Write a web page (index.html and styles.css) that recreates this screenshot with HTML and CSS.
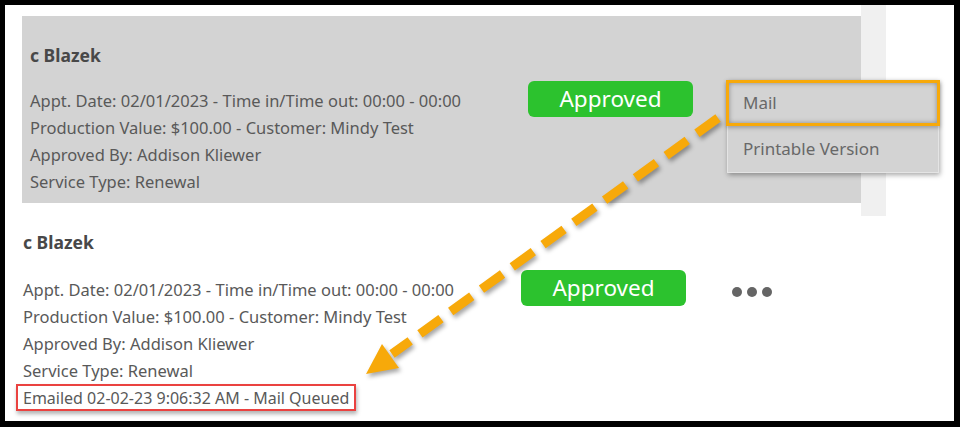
FILE: index.html
```html
<!DOCTYPE html>
<html lang="en">
<head>
    <meta charset="UTF-8">
    <title>Appointments</title>
    <link rel="stylesheet" href="styles.css">
</head>
<body>
    <div class="frame">
        <section class="list">
            <div class="record active">
                <h3 class="record-name">c Blazek</h3>
                <div class="record-body">
                    <div class="details">
                        <p>Appt. Date: 02/01/2023 - Time in/Time out: 00:00 - 00:00</p>
                        <p>Production Value: $100.00 - Customer: Mindy Test</p>
                        <p>Approved By: Addison Kliewer</p>
                        <p>Service Type: Renewal</p>
                    </div>
                    <div class="status">Approved</div>
                    <div class="actions">
                        <span class="dots"><i></i><i></i><i></i></span>
                        <ul class="menu">
                            <li class="menu-item highlighted">Mail</li>
                            <li class="menu-item">Printable Version</li>
                        </ul>
                    </div>
                </div>
            </div>
            <div class="record second">
                <h3 class="record-name">c Blazek</h3>
                <div class="record-body">
                    <div class="details">
                        <p>Appt. Date: 02/01/2023 - Time in/Time out: 00:00 - 00:00</p>
                        <p>Production Value: $100.00 - Customer: Mindy Test</p>
                        <p>Approved By: Addison Kliewer</p>
                        <p>Service Type: Renewal</p>
                        <p><span class="mail-note">Emailed 02-02-23 9:06:32 AM - Mail Queued</span></p>
                    </div>
                    <div class="status">Approved</div>
                    <div class="actions">
                        <span class="dots"><i></i><i></i><i></i></span>
                    </div>
                </div>
            </div>
        </section>
        <div class="rail"></div>
    </div>

    <!-- annotation arrow: Mail -> emailed line -->
    <svg class="arrow" width="960" height="427" viewBox="0 0 960 427">
        <line x1="718" y1="118" x2="392" y2="354" stroke="#f7a90a" stroke-width="9" stroke-dasharray="26 12"/>
        <polygon points="366,374 382,344 399,368" fill="#f7a90a"/>
    </svg>
</body>
</html>
```
FILE: styles.css
```css
body {
    margin: 0;
    background: #000;
    font-family: "Noto Sans", "Open Sans", sans-serif;
    position: relative;
}
.frame {
    margin: 5px 6px 6px 5px;
    height: 416px;
    background: #fff;
    display: flex;
    align-items: flex-start;
    overflow: hidden;
}
.list {
    width: 856px;
    padding-top: 11px;
}
.rail {
    width: 25px;
    height: 211px;
    background: #f0f0f0;
}
.record {
    padding: 26px 0 8px 8px;
    margin-left: 10px;
}
.record.active {
    margin-left: 17px;
    background: #d3d3d3;
    height: 187px;
    box-sizing: border-box;
}
.record.second {
    margin-top: 2px;
    padding-top: 24px;
}
.record-name {
    margin: 0 0 18px;
    font-size: 17.5px;
    font-weight: 700;
    line-height: 27px;
    color: #484848;
}
.record.second .record-name {
    margin-bottom: 20px;
}
.record-body {
    display: flex;
    align-items: flex-start;
}
.details {
    width: 498px;
    font-size: 16.5px;
    line-height: 27px;
    color: #595959;
}
.details p {
    margin: 0;
    white-space: nowrap;
}
.mail-note {
    display: inline-block;
    margin-left: -7px;
    padding: 0 5px;
    height: 23px;
    font-size: 16px;
    line-height: 25px;
    border: 2px solid #ea4240;
    box-shadow: 1px 3px 4px rgba(0, 0, 0, 0.3);
}
.status {
    width: 165px;
    height: 36px;
    margin-top: -6px;
    border-radius: 6px;
    background: #2cc22e;
    color: #fff;
    font-size: 22.5px;
    line-height: 36px;
    text-align: center;
}
.actions {
    position: relative;
    margin-left: 46px;
    padding-top: 11px;
}
.dots {
    display: flex;
    gap: 5px;
}
.dots i {
    width: 10px;
    height: 10px;
    border-radius: 50%;
    background: #656565;
}
.menu {
    position: absolute;
    left: -12px;
    top: -7px;
    width: 210px;
    margin: 0;
    padding: 0;
    list-style: none;
    background: #d3d3d3;
    border: 1px solid #e4e4e4;
    box-shadow: 1px 2px 5px rgba(0, 0, 0, 0.35);
}
.menu-item {
    height: 46px;
    padding-left: 15px;
    font-size: 17px;
    line-height: 46px;
    color: #686868;
    box-sizing: border-box;
}
.menu-item.highlighted {
    margin: -1px -2px 0 -2px;
    padding-left: 14px;
    line-height: 40px;
    border: 3px solid #f7a90a;
    box-shadow: inset 0 0 5px rgba(0, 0, 0, 0.35), 0 2px 4px rgba(0, 0, 0, 0.25);
}
.arrow {
    position: absolute;
    left: 0;
    top: 0;
    pointer-events: none;
    filter: drop-shadow(2px 3px 2px rgba(0, 0, 0, 0.35));
}
```
